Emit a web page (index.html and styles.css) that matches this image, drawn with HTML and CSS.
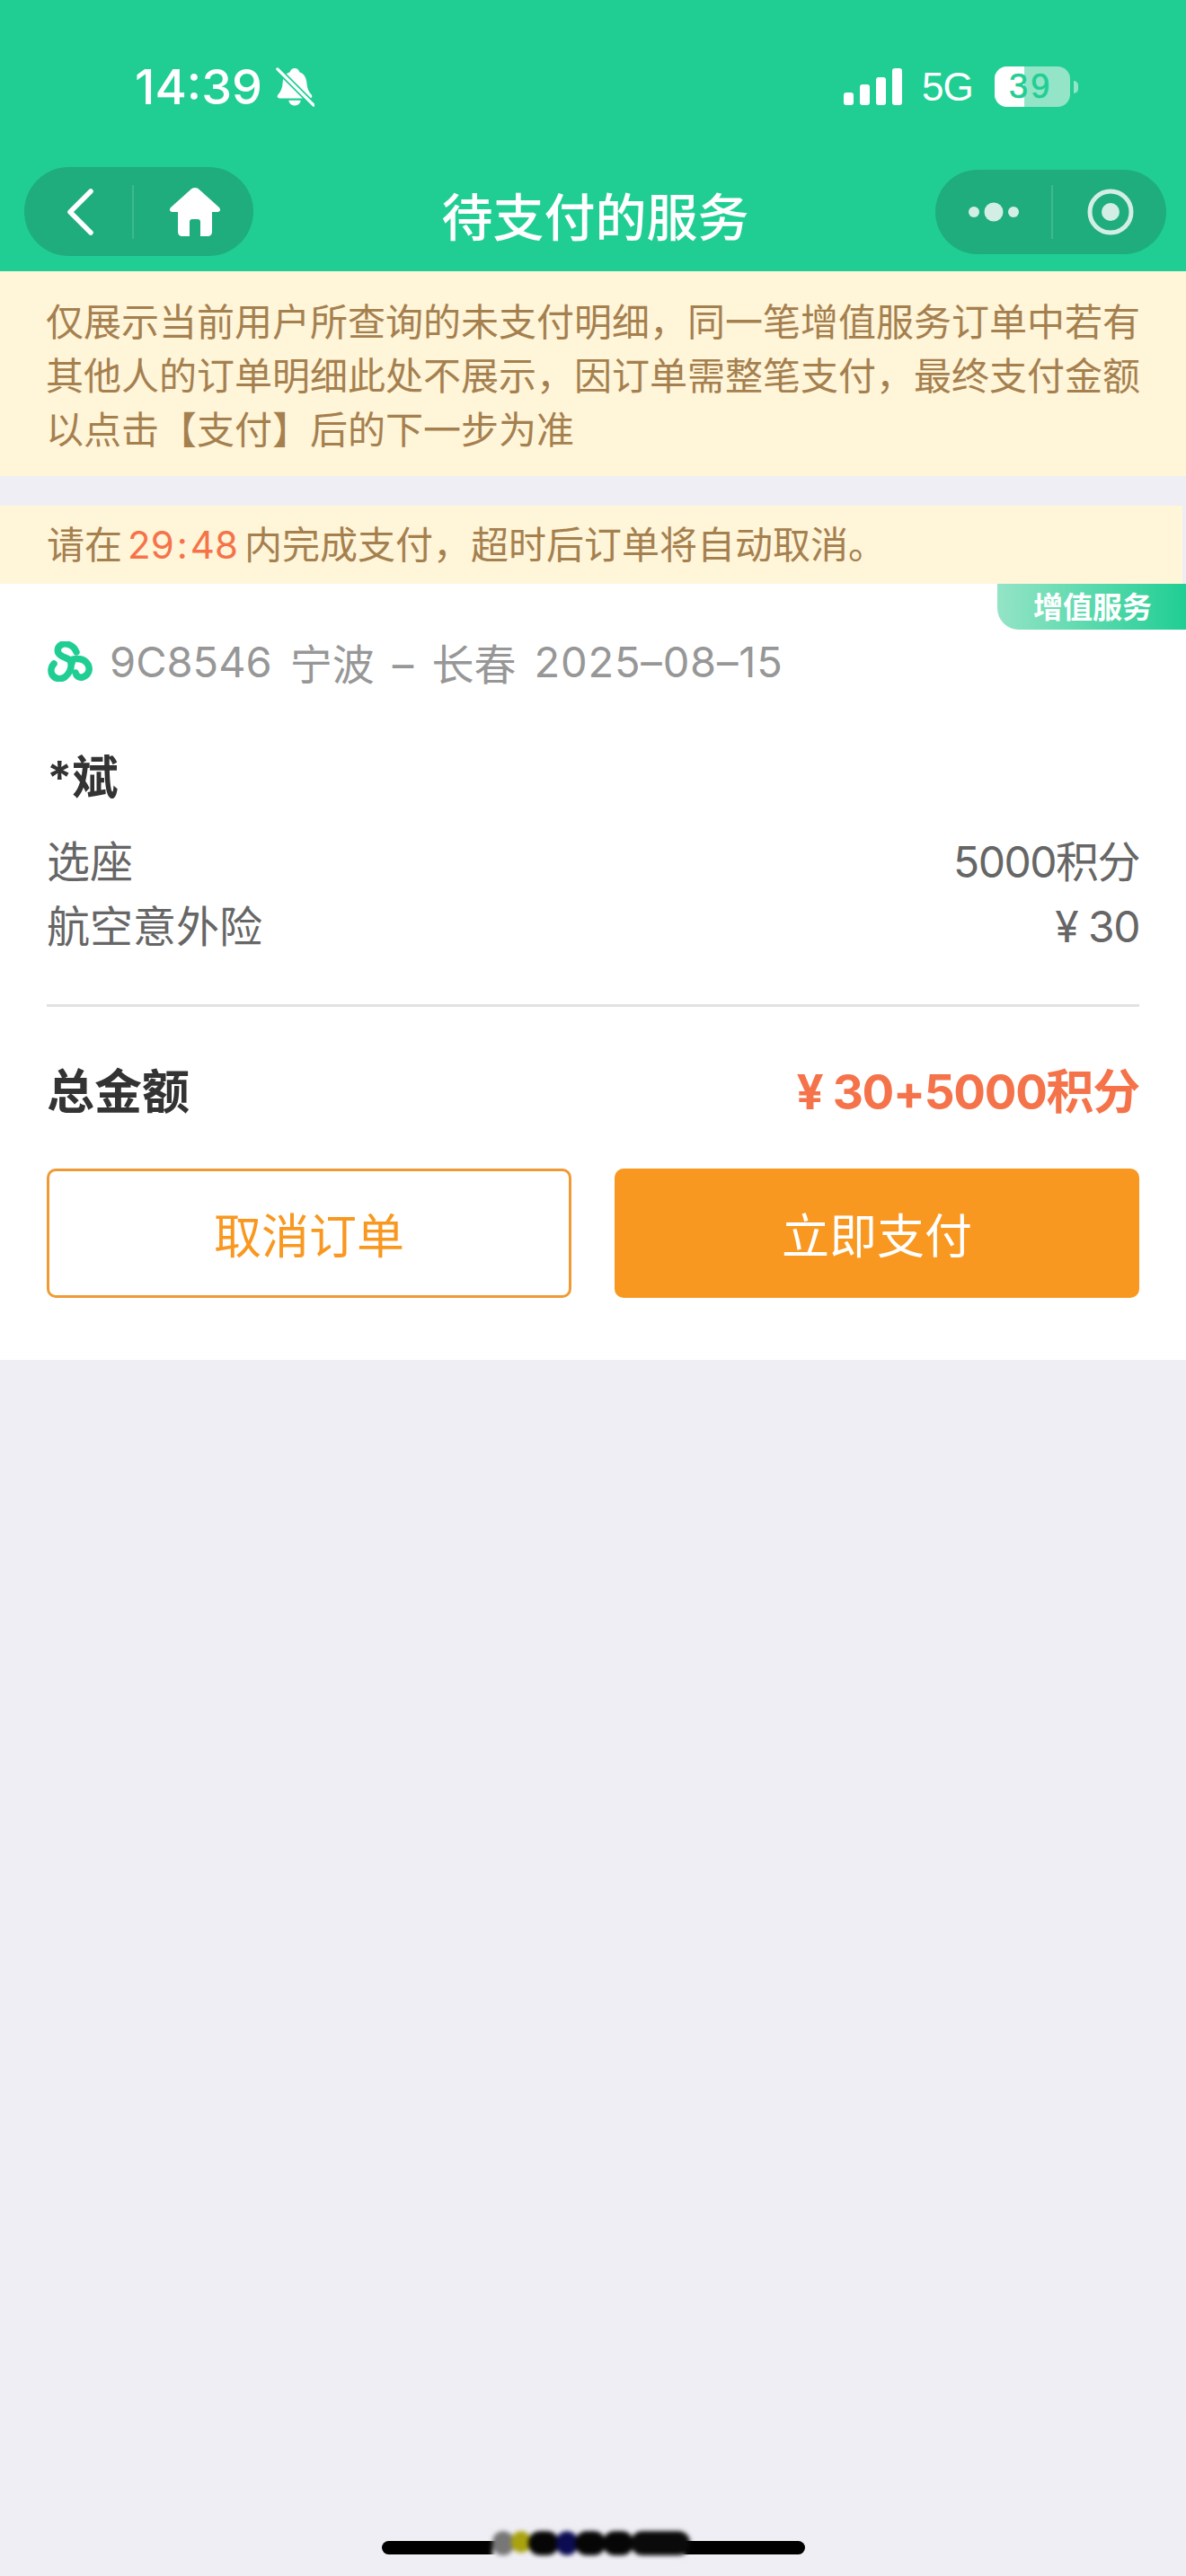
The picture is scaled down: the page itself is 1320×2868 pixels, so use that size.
FILE: index.html
```html
<!DOCTYPE html>
<html lang="zh-CN">
<head>
<meta charset="utf-8">
<title>待支付的服务</title>
<link rel="stylesheet" href="styles.css">
</head>
<body>
<div class="page">
  <header class="top">
    <div class="status">
      <div class="status-left">
        <span class="clock">14:39</span>
        <svg class="bell" viewBox="0 0 46 46" aria-hidden="true">
          <path fill="#fff" d="M23 1c3 0 5 2 5.500 4.500C34 7.500 36.500 12 37 18c.4 6 2 10 5.500 14 1.500 2 .5 4-2 4H5.500c-2.500 0-3.500-2-2-4C7 28 8.600 24 9 18c.5-6 3-10.500 8.500-12.500C18 3 20 1 23 1z"/>
          <path fill="#fff" d="M16 38.500h14c-.6 3.800-3.500 6-7 6s-6.400-2.200-7-6z"/>
          <path stroke="#20ce94" stroke-width="7" d="M2 1l42 42"/>
          <path stroke="#fff" stroke-width="3.400" stroke-linecap="round" d="M3 2l42 42"/>
        </svg>
      </div>
      <div class="status-right">
        <svg class="signal" viewBox="0 0 65 41" aria-hidden="true">
          <rect x="0" y="27" width="11" height="14" rx="3"/>
          <rect x="18" y="18" width="11" height="23" rx="3"/>
          <rect x="36" y="10" width="11" height="31" rx="3"/>
          <rect x="54" y="0" width="11" height="41" rx="3"/>
        </svg>
        <span class="network">5G</span>
        <div class="battery">
          <div class="battery-body"><span class="battery-fill"></span><span class="battery-num">39</span></div>
          <span class="battery-tip"></span>
        </div>
      </div>
    </div>
    <nav class="nav">
      <div class="pill pill-left">
        <svg class="back" viewBox="0 0 30 52" aria-hidden="true"><path d="M27 3L4 26l23 23" fill="none" stroke="#fff" stroke-width="5.500" stroke-linecap="round" stroke-linejoin="round"/></svg>
        <span class="pill-line"></span>
        <svg class="home" viewBox="0 0 58 54" aria-hidden="true"><path fill="#fff" d="M29 0c2 0 3.500.8 5 2.300L56 22c2 2.500 1 5-2 5h-6v22c0 3-2 5-5 5h-8V38c0-2-1-3-3-3h-6c-2 0-3 1-3 3v16h-8c-3 0-5-2-5-5V27H4c-3 0-4-2.500-2-5L24 2.300C25.500.8 27 0 29 0z"/></svg>
      </div>
      <h1 class="title">待支付的服务</h1>
      <div class="pill pill-right">
        <svg class="more" viewBox="0 0 56 22" aria-hidden="true">
          <circle cx="6" cy="11" r="6"/><circle cx="28" cy="11" r="10.500"/><circle cx="50" cy="11" r="6"/>
        </svg>
        <span class="pill-line"></span>
        <svg class="target" viewBox="0 0 52 52" aria-hidden="true">
          <circle cx="26" cy="26" r="23" fill="none" stroke="#d3eee4" stroke-width="5"/>
          <circle cx="26" cy="26" r="10" fill="#d3eee4"/>
        </svg>
      </div>
    </nav>
  </header>

  <p class="notice">仅展示当前用户所查询的未支付明细，同一笔增值服务订单中若有其他人的订单明细此处不展示，因订单需整笔支付，最终支付金额以点击【支付】后的下一步为准</p>

  <p class="timer">请在<span class="count">29<span class="colon">:</span>48</span>内完成支付，超时后订单将自动取消。</p>

  <section class="card">
    <span class="tag">增值服务</span>
    <div class="flight">
      <svg class="logo" viewBox="0 0 51 45" aria-hidden="true">
        <g fill="none" stroke="#20ce94" stroke-width="7.500" stroke-linecap="round">
          <path d="M33 12C30 4 21 1 16 4c-5 3-5 9 0 12 5 3 10 3 12 8"/>
          <path d="M26 21c7-3 16-2 20 5 3 6 0 12-6 14-4 1-7-1-8-5"/>
          <path d="M27 25c1 6-3 12-7 15-5 3-11 2-14-3-2-4-1-9 2-12"/>
        </g>
      </svg>
      <span class="flight-text">9C8546</span>
      <span class="flight-text flight-route">宁波 – 长春</span>
      <span class="flight-text flight-date">2025–08–15</span>
    </div>
    <h2 class="passenger">*斌</h2>
    <div class="rows">
      <div class="row"><span>选座</span><span class="row-value">5000积分</span></div>
      <div class="row"><span>航空意外险</span><span class="row-value">¥ 30</span></div>
    </div>
    <div class="total">
      <span class="total-label">总金额</span>
      <span class="total-value">¥ 30+5000积分</span>
    </div>
    <div class="actions">
      <button class="btn btn-ghost" type="button">取消订单</button>
      <button class="btn btn-solid" type="button">立即支付</button>
    </div>
  </section>

  <div class="indicator">
    <span class="indicator-bar"></span>
    <div class="smudge">
      <span class="smudge-dot smudge-grey"></span>
      <span class="smudge-dot smudge-yellow"></span>
      <span class="smudge-dot smudge-black"></span>
      <span class="smudge-dot smudge-navy"></span>
      <span class="smudge-dot smudge-black"></span>
      <span class="smudge-dot smudge-black"></span>
      <span class="smudge-dot smudge-wide"></span>
    </div>
  </div>
</div>
</body>
</html>
```

FILE: styles.css
```css
* { box-sizing: border-box; }

html, body { margin: 0; padding: 0; }

body {
  width: 1320px;
  height: 2868px;
  background: #efeef4;
  font-family: "Inter", "Noto Sans CJK SC", sans-serif;
  overflow: hidden;
}

.page {
  position: relative;
  width: 1320px;
  height: 2868px;
  display: flex;
  flex-direction: column;
}

/* Green header: status bar and mini-program navigation */
.top {
  background: #20ce94;
  height: 302px;
  color: #fff;
}

.status {
  height: 186px;
  display: flex;
  justify-content: space-between;
  align-items: flex-start;
  padding: 74px 120px 0 150px;
}

.status-left { display: flex; align-items: center; gap: 14px; height: 46px; }

.clock {
  font-size: 54px;
  line-height: 46px;
  font-weight: 500;
  letter-spacing: 0;
}

.bell { width: 44px; height: 46px; }

.status-right { display: flex; align-items: flex-start; }

.signal { width: 65px; height: 41px; margin-top: 2px; fill: #fff; }

.network {
  font-family: "Liberation Sans", sans-serif;
  font-size: 44px;
  line-height: 46px;
  margin-left: 22px;
  width: 60px;
  letter-spacing: -1px;
}

.battery { display: flex; align-items: center; margin-left: 21px; }

.battery-body {
  position: relative;
  width: 84px;
  height: 45px;
  border-radius: 14px;
  background: #94e4c8;
  overflow: hidden;
}

.battery-fill {
  position: absolute;
  left: 0;
  top: 0;
  bottom: 0;
  width: 33px;
  background: #fff;
}

.battery-num {
  position: absolute;
  left: 16px;
  top: 0;
  font-family: "Liberation Sans", sans-serif;
  font-size: 38px;
  font-weight: 400;
  letter-spacing: 3px;
  line-height: 45px;
  color: #20ce94;
  -webkit-text-stroke: 0.6px #20ce94;
}

.battery-tip {
  width: 5px;
  height: 14px;
  margin-left: 4px;
  border-radius: 0 5px 5px 0;
  background: #94e4c8;
}

.nav {
  display: grid;
  grid-template-columns: 1fr auto 1fr;
  align-items: center;
  height: 99px;
  padding: 0 22px 0 27px;
}

.pill {
  display: flex;
  align-items: center;
  background: #1fad7e;
}

.pill-left {
  justify-self: start;
  width: 255px;
  height: 99px;
  border-radius: 50px;
  padding-left: 47px;
}

.pill-right {
  justify-self: end;
  width: 257px;
  height: 94px;
  border-radius: 47px;
  padding-left: 37px;
}

.pill-line {
  width: 2px;
  height: 60px;
  background: rgba(255, 255, 255, 0.14);
}

.back { width: 30px; height: 52px; margin-right: 43px; }
.pill-left .pill-line { margin-right: 39px; }
.home { width: 58px; height: 54px; }

.more { width: 56px; height: 22px; fill: #d3eee4; margin-right: 36px; }
.pill-right .pill-line { margin-right: 38px; }
.target { width: 52px; height: 52px; }

.title {
  margin: 0;
  padding-top: 4px;
  font-family: "Noto Sans CJK SC", sans-serif;
  font-size: 57px;
  line-height: 70px;
  font-weight: 500;
  color: #fff;
}

/* Yellow notices */
.notice {
  margin: 0;
  height: 228px;
  padding: 24px 48px 24px 51px;
  background: #fff5d9;
  color: #a5804f;
  font-family: "Noto Sans CJK SC", sans-serif;
  font-size: 42px;
  line-height: 60px;
  font-weight: 400;
}

.timer {
  margin: 33px 4px 0 0;
  height: 87px;
  padding-left: 52px;
  background: #fff5d9;
  color: #a5804f;
  font-family: "Inter", "Noto Sans CJK SC", sans-serif;
  font-size: 42px;
  line-height: 87px;
}

.count {
  color: #f5734a;
  margin: 0 7px 0 6px;
}

.colon { margin: 0 3px; }

/* Order card */
.card {
  position: relative;
  height: 864px;
  background: #fff;
  padding: 0 52px;
}

.tag {
  position: absolute;
  top: 0;
  right: 0;
  width: 210px;
  height: 51px;
  border-bottom-left-radius: 24px;
  background: linear-gradient(90deg, #94e4c6, #20ce94);
  color: #fff;
  font-family: "Noto Sans CJK SC", sans-serif;
  font-size: 33px;
  font-weight: 700;
  line-height: 49px;
  text-align: center;
  padding-left: 2px;
}

.flight {
  display: flex;
  align-items: center;
  height: 64px;
  margin-top: 54px;
  gap: 20px;
  color: #979797;
  font-size: 47px;
  font-family: "Inter", "Noto Sans CJK SC", sans-serif;
}

.logo { width: 51px; height: 45px; margin-right: -1px; flex-shrink: 0; }

.flight-text { white-space: nowrap; }

.flight-route { word-spacing: 7px; }

.flight-date { letter-spacing: 0.800px; }

.passenger {
  margin: 66px 0 0;
  font-family: "Inter", "Noto Sans CJK SC", sans-serif;
  font-size: 51px;
  line-height: 64px;
  font-weight: 700;
  color: #333;
}

.rows { margin-top: 26px; }

.row {
  display: flex;
  justify-content: space-between;
  height: 72px;
  font-family: "Inter", "Noto Sans CJK SC", sans-serif;
  font-size: 48px;
  line-height: 72px;
  color: #666;
}

.row-value { letter-spacing: -1.500px; }

.total {
  display: flex;
  justify-content: space-between;
  align-items: center;
  height: 101px;
  margin-top: 50px;
  border-top: 3px solid #e2e2e2;
  box-sizing: content-box;
  padding-top: 40px;
  font-family: "Inter", "Noto Sans CJK SC", sans-serif;
}

.total-label { font-size: 53px; font-weight: 700; color: #333; }

.total-value { font-size: 53px; font-weight: 700; color: #f5734a; letter-spacing: -1.300px; }

.actions {
  display: grid;
  grid-template-columns: 584px 584px;
  justify-content: space-between;
  margin-top: 39px;
}

.btn {
  height: 144px;
  border-radius: 10px;
  font-family: "Noto Sans CJK SC", sans-serif;
  font-size: 53px;
  font-weight: 400;
}

.btn-ghost { background: #fff; border: 3px solid #ef9a34; color: #f99820; }
.btn-solid { background: #f99820; border: 0; color: #fff; }

/* Home indicator, with the smudged patch lying across it */
.indicator-bar {
  position: absolute;
  left: 425px;
  top: 2829px;
  width: 471px;
  height: 15px;
  border-radius: 8px;
  background: #000;
}

.smudge {
  position: absolute;
  left: 548px;
  top: 2815px;
  width: 214px;
  height: 36px;
  display: flex;
  align-items: flex-start;
  padding-top: 3px;
  background: #efeef4;
  filter: blur(2.500px);
}

.smudge-dot { flex-shrink: 0; height: 27px; border-radius: 13px; background: #060606; width: 34px; margin-right: -3px; }
.smudge-grey { background: #777; width: 24px; }
.smudge-yellow { background: #a9a310; width: 22px; height: 24px; }
.smudge-navy { background: #0c0c52; width: 24px; }
.smudge-wide { width: 66px; background: #0a0a0a; }
```
